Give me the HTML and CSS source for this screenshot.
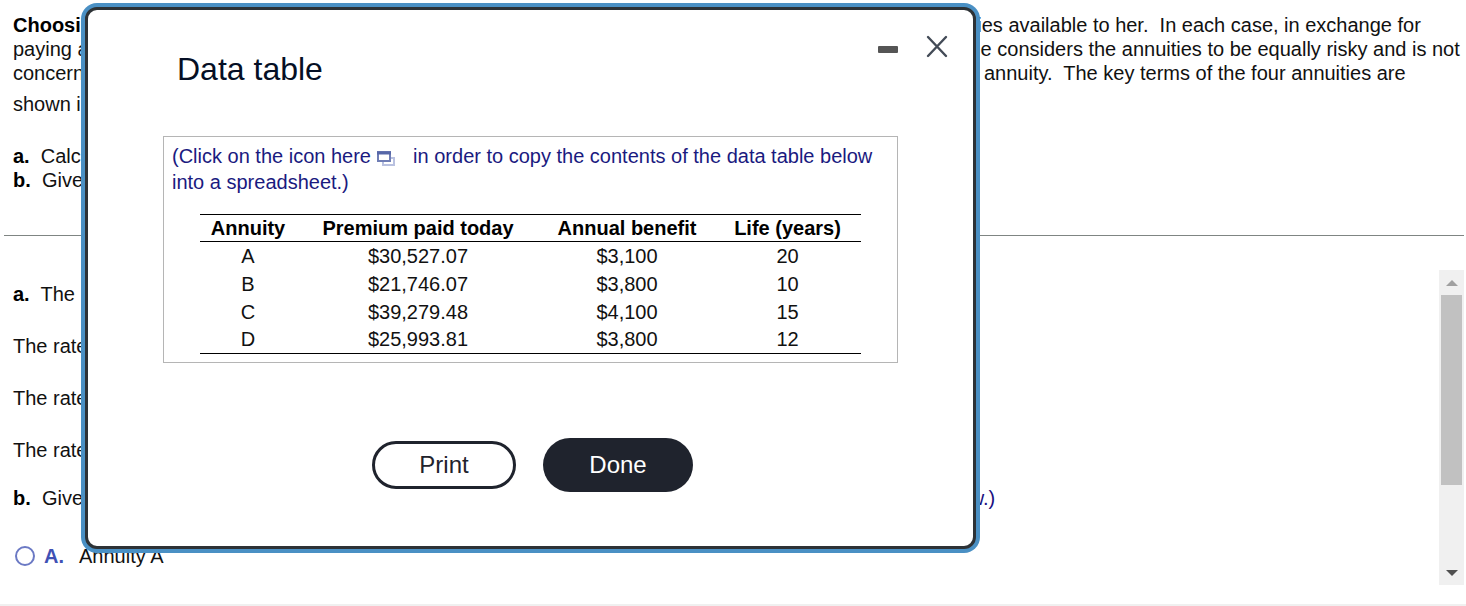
FILE: index.html
```
<!DOCTYPE html>
<html lang="en">
<head>
    <meta charset="UTF-8">
    <meta name="viewport" content="width=device-width, initial-scale=1.0">
    <title>Data table</title>
    <link rel="stylesheet" href="styles.css">
</head>
<body>
    <!-- Question -->
    <section class="question">
        <div class="columns">
            <p><b>Choosi</b><br>paying a<br>concern</p>
            <p>
                uities available to her.&nbsp; In each case, in exchange for<br>
                She considers the annuities to be equally risky and is not<br>
                an annuity.&nbsp; The key terms of the four annuities are
            </p>
        </div>
        <p class="last-line">shown in</p>
        <p class="parts">
            <b>a.</b>&nbsp; Calc<br>
            <b>b.</b>&nbsp; Give
        </p>
    </section>

    <!-- Answer area -->
    <main class="answer">
        <div class="answer-body">
            <p><b>a.</b>&nbsp; The</p>
            <p>The rate</p>
            <p>The rate</p>
            <p>The rate</p>
            <div class="columns part-b">
                <p><b>b.</b>&nbsp; Give</p>
                <p class="hint">low.)</p>
            </div>
            <label class="choice">
                <input type="radio" name="annuity" value="A">
                <b>A.</b>
                <span>Annuity A</span>
            </label>
        </div>
        <div class="scrollbar">
            <button type="button" class="arrow up" aria-label="Scroll up"></button>
            <div class="thumb"></div>
            <button type="button" class="arrow down" aria-label="Scroll down"></button>
        </div>
    </main>

    <!-- Data table window -->
    <div class="modal" role="dialog" aria-labelledby="modalTitle">
        <div class="modal-header">
            <h1 id="modalTitle">Data table</h1>
            <div class="window-buttons">
                <button type="button" aria-label="Minimize">
                    <svg width="22" height="24" viewBox="0 0 22 24"><rect x="1" y="12" width="20" height="7" rx="1" fill="#555"/></svg>
                </button>
                <button type="button" aria-label="Close">
                    <svg width="22" height="24" viewBox="0 0 22 24"><path d="M2 3L20 22M20 3L2 22" stroke="#434b57" stroke-width="2.4" stroke-linecap="round"/></svg>
                </button>
            </div>
        </div>

        <div class="data-box">
            <p class="copy-note">(Click on the icon here <button type="button" class="copy" aria-label="Copy table"><svg width="19" height="16" viewBox="0 0 19 16" fill="none"><path d="M14 7H17V14H6V10" stroke="#b9c1e0" stroke-width="2"/><rect x="1" y="1" width="12" height="9" fill="#fff" stroke="#6f7db5" stroke-width="2"/><path d="M0 2H14" stroke="#5667a8" stroke-width="3"/></svg></button> in order to copy the contents of the data table below into a spreadsheet.)</p>
            <table>
                <thead>
                    <tr><th class="name">Annuity</th><th class="premium">Premium paid today</th><th class="benefit">Annual benefit</th><th class="life">Life (years)</th></tr>
                </thead>
                <tbody>
                    <tr><td>A</td><td>$30,527.07</td><td>$3,100</td><td>20</td></tr>
                    <tr><td>B</td><td>$21,746.07</td><td>$3,800</td><td>10</td></tr>
                    <tr><td>C</td><td>$39,279.48</td><td>$4,100</td><td>15</td></tr>
                    <tr><td>D</td><td>$25,993.81</td><td>$3,800</td><td>12</td></tr>
                </tbody>
            </table>
        </div>

        <div class="modal-footer">
            <button type="button" class="print">Print</button>
            <button type="button" class="done">Done</button>
        </div>
    </div>
</body>
</html>
```
FILE: styles.css
```
* {
    box-sizing: border-box;
}
body {
    font-family: "Liberation Sans", Arial, sans-serif;
    font-size: 20px;
    line-height: 24px;
    color: #111;
    background-color: #fff;
    margin: 0;
    min-height: 100vh;
    position: relative;
    display: flex;
    flex-direction: column;
}
p {
    margin: 0;
    white-space: nowrap;
}
b {
    color: #000;
}
button {
    font-family: inherit;
    border: none;
    background: none;
    padding: 0;
    cursor: pointer;
}
.columns {
    display: grid;
    grid-template-columns: 65% 1fr;
}

/* Question */
.question {
    margin: 0 2px 0 4px;
    padding: 13px 0 43px 9px;
    border-bottom: 1px solid #7f8583;
}
.last-line {
    margin-top: 7px;
}
.parts {
    margin-top: 28px;
}

/* Answer area */
.answer {
    display: flex;
    flex: 1;
    padding: 34px 2px 19px 13px;
    border-bottom: 2px solid #f0f0f0;
}
.answer-body {
    flex: 1;
    padding-top: 12px;
}
.answer-body > p {
    margin-bottom: 28px;
}
.part-b {
    grid-template-columns: 66% 1fr;
    margin: -4px 0 34px;
}
.hint {
    color: #1a1080;
}
.choice {
    display: flex;
    align-items: center;
    width: fit-content;
}
.choice input {
    appearance: none;
    width: 20px;
    height: 20px;
    margin: 0 9px 0 2px;
    border: 2px solid #6b79c4;
    border-radius: 50%;
}
.choice input:checked {
    background-color: #3f51b5;
}
.choice b {
    color: #3f51b5;
    margin-right: 15px;
}
.scrollbar {
    display: flex;
    flex-direction: column;
    width: 25px;
    background-color: #f0f0f0;
}
.arrow {
    display: flex;
    justify-content: center;
    align-items: center;
    height: 25px;
}
.arrow::before {
    content: "";
    border-left: 6px solid transparent;
    border-right: 6px solid transparent;
}
.up::before {
    border-bottom: 6px solid #a0a0a0;
}
.down {
    margin-top: auto;
}
.down::before {
    border-top: 6px solid #505050;
}
.thumb {
    height: 190px;
    margin: 0 2px;
    background-color: #c1c1c1;
}

/* Data table window */
.modal {
    position: absolute;
    top: 7px;
    left: 85px;
    width: 891px;
    padding: 24px 25px 54px 75px;
    background-color: #fff;
    border: 3px solid #2d3236;
    border-radius: 12px;
    box-shadow: 0 0 0 4px #4a90c4;
}
.modal-header {
    display: flex;
    justify-content: space-between;
    align-items: flex-start;
}
h1 {
    margin: 15px 0 0 14px;
    font-size: 32px;
    line-height: 40px;
    font-weight: normal;
    color: #050f25;
}
.window-buttons {
    display: flex;
    gap: 27px;
}
.window-buttons svg {
    display: block;
}
.data-box {
    width: 735px;
    margin-top: 47px;
    padding: 6px 8px 8px 8px;
    border: 1px solid #b5b5b5;
}
.copy-note {
    color: #1a1a80;
    line-height: 26px;
    white-space: normal;
}
.copy {
    margin: 0 12px 0 0;
    vertical-align: -4px;
}
.copy svg {
    display: block;
}
table {
    width: 661px;
    margin: 19px 0 0 28px;
    border-collapse: collapse;
    border-top: 1px solid #000;
    border-bottom: 1px solid #000;
    table-layout: fixed;
    text-align: center;
}
th, td {
    height: 28px;
    padding: 0;
}
th {
    height: 27px;
    color: #000;
    border-bottom: 1px solid #000;
}
.name {
    width: 96px;
}
.premium {
    width: 244px;
}
.benefit {
    width: 174px;
}

/* Buttons */
.modal-footer {
    display: flex;
    align-items: center;
    gap: 27px;
    margin: 75px 0 0 209px;
}
.modal-footer button {
    font-size: 24px;
    color: #1f232d;
    border-radius: 27px;
}
.modal-footer .print {
    width: 144px;
    height: 48px;
    border: 3px solid #1f232d;
}
.modal-footer .done {
    width: 150px;
    height: 54px;
    color: #fff;
    background-color: #1f232d;
}
```
